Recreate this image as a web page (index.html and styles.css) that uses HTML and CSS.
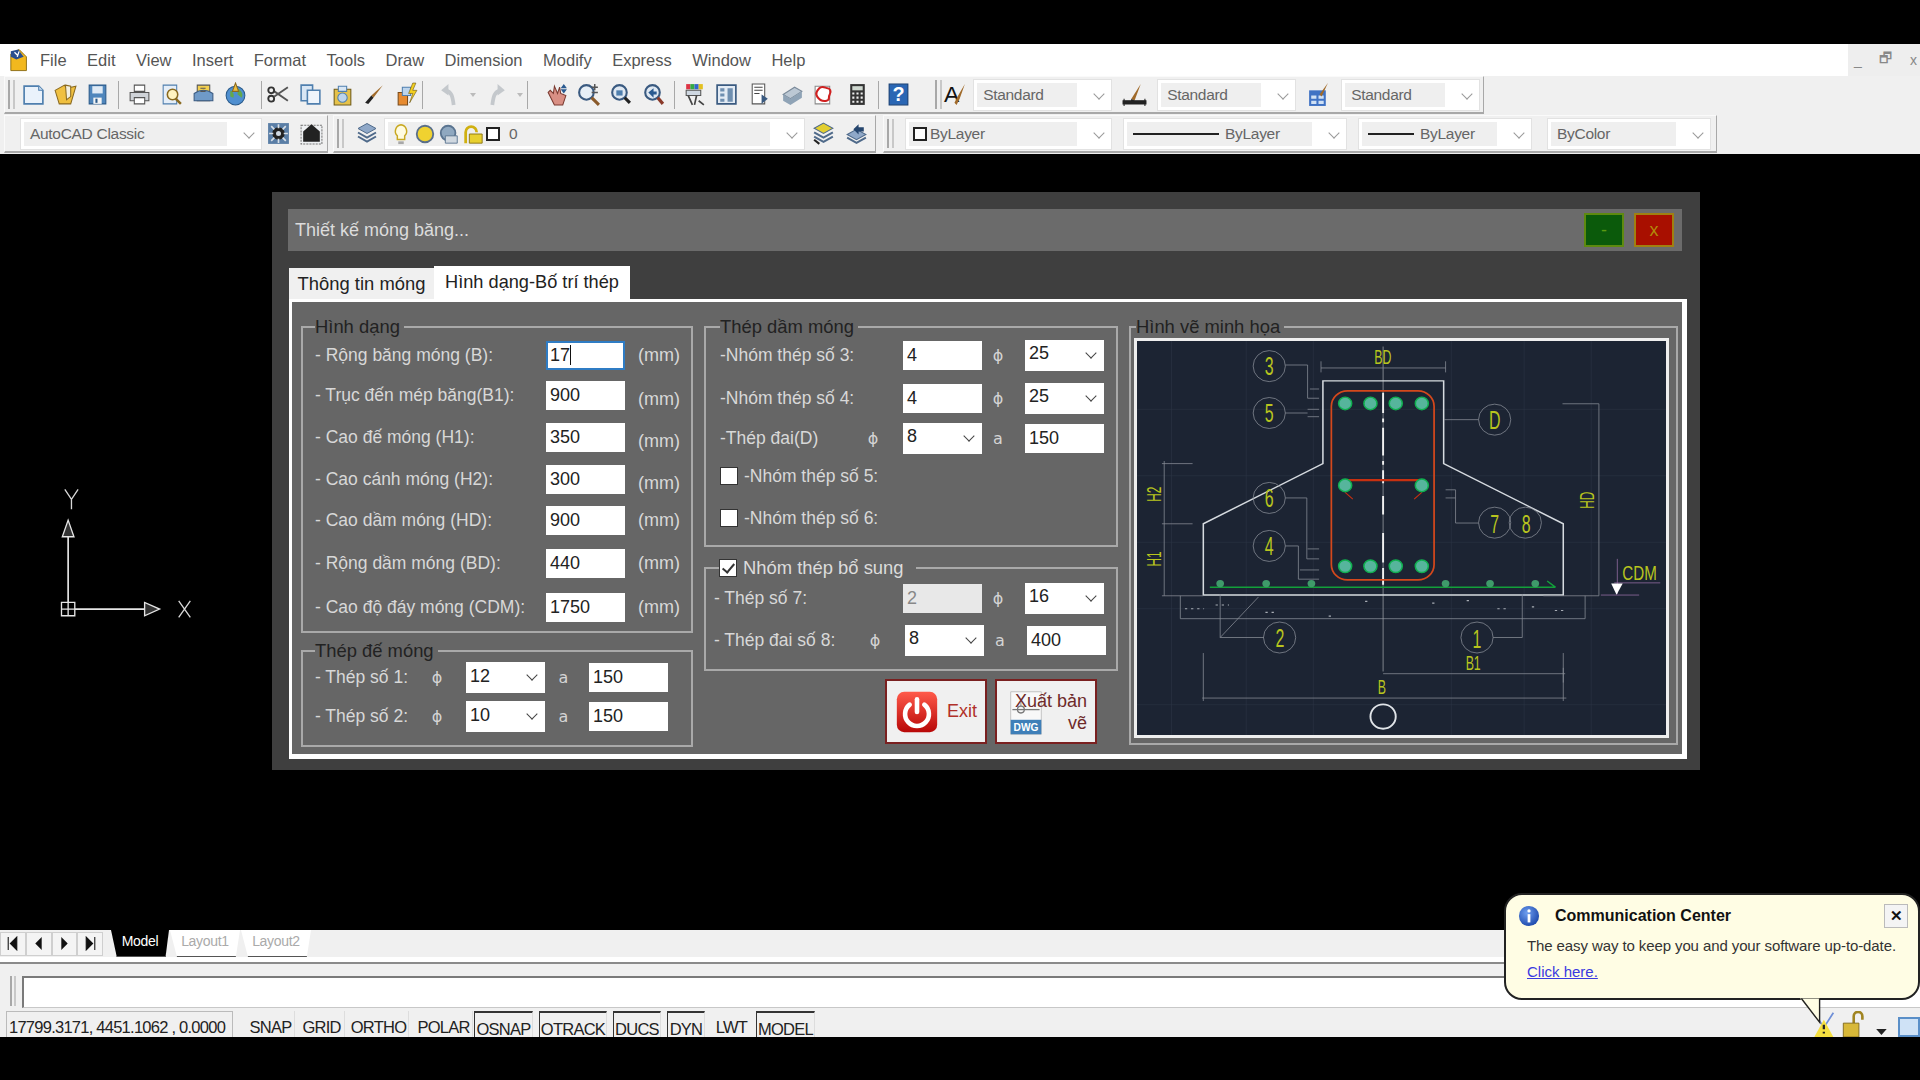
FILE: index.html
```html
<!DOCTYPE html>
<html lang="vi">
<head>
<meta charset="utf-8">
<title>AutoCAD - Thiết kế móng băng</title>
<link rel="stylesheet" href="styles.css">
</head>
<body>
<div class="band-top"></div>
<div class="app">
  <nav class="menubar">
    <svg class="logo" viewBox="0 0 24 26"><path d="M2 6l9-5 8 8v15H2z" fill="#f2b81e" stroke="#8a6a10"/><path d="M2 3l8-2 6 8-8 3-6-3z" fill="#2a4f8f"/><path d="M6 4l3 3M11 3l-2 6" stroke="#fff" stroke-width="1.4"/></svg>
    <div class="menu-items">
      <span>File</span><span>Edit</span><span>View</span><span>Insert</span><span>Format</span><span>Tools</span><span>Draw</span><span>Dimension</span><span>Modify</span><span>Express</span><span>Window</span><span>Help</span>
    </div>
    <div class="winctl"><span>_</span><span>🗗</span><span>x</span></div>
  </nav>

  <div class="tb-row tb-row1">
    <div class="tb tb-std">
      <i class="grip"></i>
      <b class="ic"><svg viewBox="0 0 24 24"><path d="M3 4h14l4 4v13H3z" fill="#eaf2fb" stroke="#4f7fae" stroke-width="1.6"/><path d="M17 4v4h4" fill="#cfe0f2" stroke="#4f7fae"/></svg></b>
      <b class="ic"><svg viewBox="0 0 24 24"><path d="M2 8l9-5 2 3 9-2-5 17H6z" fill="#f0c040" stroke="#8a6a20"/><path d="M12 3l5 1v10l-4 3z" fill="#f4f0e0" stroke="#8a6a20"/></svg></b>
      <b class="ic"><svg viewBox="0 0 24 24"><path d="M4 3h16v18H4z" fill="#4f86bc" stroke="#2a5a8a"/><path d="M7 4h10v7H7z" fill="#dfeaf5"/><path d="M8 15h8v6H8z" fill="#f5f5f5"/><path d="M10 16h2v4h-2z" fill="#2a5a8a"/></svg></b>
      <i class="sep s1"></i>
      <b class="ic"><svg viewBox="0 0 24 24"><path d="M7 3h10v6H7z" fill="#fff" stroke="#555"/><path d="M3 10h18v8H3z" fill="#cfd3d8" stroke="#555"/><path d="M7 15h10v6H7z" fill="#fff" stroke="#555"/></svg></b>
      <b class="ic"><svg viewBox="0 0 24 24"><path d="M4 3h13v18H4z" fill="#e5eef8" stroke="#4f7fae"/><circle cx="13" cy="12" r="5" fill="#fff3c0" stroke="#8a6a20" stroke-width="1.5"/><path d="M16 16l5 5" stroke="#8a6a20" stroke-width="2.4"/></svg></b>
      <b class="ic"><svg viewBox="0 0 24 24"><path d="M6 3h12v15H6z" fill="#f3d050" stroke="#555"/><path d="M3 11c6-4 12-4 18 0v7H3z" fill="#6f9ac8" stroke="#3a5a80"/><path d="M9 6h5M9 9h5" stroke="#555"/></svg></b>
      <b class="ic"><svg viewBox="0 0 24 24"><circle cx="12" cy="13" r="9" fill="#4f8fd0" stroke="#2a5a8a"/><path d="M7 8c3 2 4 4 3 7l-3-1zM14 6c3 2 6 5 4 9l-4-3z" fill="#63a84c"/><path d="M12 1l3 8h-6z" fill="#f0c040" stroke="#8a6a20"/></svg></b>
      <i class="sep s2"></i>
      <b class="ic"><svg viewBox="0 0 24 24"><path d="M21 5L8 14M21 18L8 9" stroke="#555" stroke-width="1.8"/><circle cx="5" cy="8" r="2.8" fill="none" stroke="#333" stroke-width="1.8"/><circle cx="5" cy="16" r="2.8" fill="none" stroke="#333" stroke-width="1.8"/></svg></b>
      <b class="ic"><svg viewBox="0 0 24 24"><path d="M3 3h11v15H3z" fill="#d8e6f4" stroke="#4f7fae" stroke-width="1.5"/><path d="M9 8h12v13H9z" fill="#eef4fb" stroke="#4f7fae" stroke-width="1.5"/></svg></b>
      <b class="ic"><svg viewBox="0 0 24 24"><path d="M4 7h16v15H4z" fill="#e6c24a" stroke="#6f5a18"/><path d="M8 4h8v5H8z" fill="#d8e6f4" stroke="#4f7fae"/><circle cx="12" cy="15" r="4.5" fill="#bcd4ec" stroke="#4f7fae"/></svg></b>
      <b class="ic"><svg viewBox="0 0 24 24"><path d="M20 3l-9 12-2-2z" fill="#a06a2a"/><path d="M9 13l2 2-5 6-3-1z" fill="#222"/></svg></b>
      <b class="ic"><svg viewBox="0 0 24 24"><path d="M4 10h9v12H4z" fill="#e68a30" stroke="#7a4a18"/><path d="M8 5h8v8H8z" fill="#bcd4ec" stroke="#4f7fae"/><path d="M18 1l-4 10h4l-3 9 7-12h-4l3-7z" fill="#f3d020" stroke="#6f5a18" stroke-width=".6"/></svg></b>
      <i class="sep s3"></i>
      <b class="ic"><svg viewBox="0 0 24 24"><path d="M16 22c-1-8-2-13-8-14" fill="none" stroke="#c4c8cc" stroke-width="3.6"/><path d="M11 2L4 8l7 5z" fill="#c4c8cc"/></svg></b>
      <b class="ic narrow"><i class="mini"></i></b>
      <b class="ic mirror"><svg viewBox="0 0 24 24"><path d="M16 22c-1-8-2-13-8-14" fill="none" stroke="#c4c8cc" stroke-width="3.6"/><path d="M11 2L4 8l7 5z" fill="#c4c8cc"/></svg></b>
      <b class="ic narrow"><i class="mini"></i></b>
      <i class="sep s4"></i>
      <b class="ic"><svg viewBox="0 0 24 24"><path d="M4 10l6 12h8l3-9-5-2-1-6-2 6-3-7-1 7-3-3z" fill="#d98f84" stroke="#7a3a30"/><path d="M19 2l3 4h-6zM19 11l3-4h-6z" fill="#2a5a90"/></svg></b>
      <b class="ic"><svg viewBox="0 0 24 24"><circle cx="10" cy="10" r="7" fill="#e6eef6" stroke="#3a5a80" stroke-width="2"/><path d="M15 15l7 7" stroke="#8a5a2a" stroke-width="3"/><path d="M18 2v6M15 5h6M15 10h6" stroke="#555" stroke-width="1.4"/></svg></b>
      <b class="ic"><svg viewBox="0 0 24 24"><circle cx="11" cy="10" r="7" fill="#dfe8f2" stroke="#3a5a80" stroke-width="2"/><path d="M8 8h6v5H8z" fill="#4f7fae"/><path d="M16 15l5 5" stroke="#222" stroke-width="3"/></svg></b>
      <b class="ic"><svg viewBox="0 0 24 24"><circle cx="12" cy="10" r="7" fill="#dfe8f2" stroke="#3a5a80" stroke-width="2"/><path d="M8 10l5-4v3h3v3h-3v3z" fill="#2a5a90"/><path d="M17 15l5 6" stroke="#8a3a2a" stroke-width="3"/></svg></b>
      <i class="sep s5"></i>
      <b class="ic"><svg viewBox="0 0 24 24"><path d="M4 2h4v5H4z" fill="#d34"/><path d="M8 2h4v5H8z" fill="#3a4"/><path d="M12 2h4v5h-4z" fill="#36c"/><path d="M16 2h4v5h-4z" fill="#e3c020"/><path d="M4 8h14v5H4z" fill="#cfd8e2" stroke="#555"/><path d="M6 13l4 9M14 13l-2 9M16 18l5 4" stroke="#444" stroke-width="1.6"/></svg></b>
      <b class="ic"><svg viewBox="0 0 24 24"><path d="M3 3h18v18H3z" fill="#e3ebf4" stroke="#3a5a80" stroke-width="1.6"/><path d="M6 6h4v3H6zM6 11h4v3H6zM6 16h4v3H6zM13 6h5v13h-5z" fill="#6f8fb0"/></svg></b>
      <b class="ic"><svg viewBox="0 0 24 24"><path d="M5 2h12v19H5z" fill="#fff" stroke="#555"/><path d="M7 5h8M7 8h8M7 11h5" stroke="#444"/><path d="M14 12l6 4-6 5z" fill="#3a5a80"/></svg></b>
      <b class="ic"><svg viewBox="0 0 24 24"><path d="M3 12l11-7 7 4-11 7z" fill="#bcc8d4" stroke="#7a8a9a"/><path d="M3 12v6l7 4 11-7V9l-11 7z" fill="#8fa3b6"/></svg></b>
      <b class="ic"><svg viewBox="0 0 24 24"><path d="M3 4h14v17H3z" fill="#fff" stroke="#888"/><path d="M7 6c3-3 6 0 8 0s4 3 2 6 1 5-3 6-7-1-9-4 0-6 2-8z" fill="none" stroke="#d02020" stroke-width="2"/></svg></b>
      <b class="ic"><svg viewBox="0 0 24 24"><path d="M5 2h14v20H5z" fill="#333"/><path d="M7 4h10v4H7z" fill="#cfd8d0"/><path d="M7 10h2v2H7zM11 10h2v2h-2zM15 10h2v2h-2zM7 14h2v2H7zM11 14h2v2h-2zM15 14h2v2h-2zM7 18h2v2H7zM11 18h2v2h-2zM15 18h2v2h-2z" fill="#eee"/></svg></b>
      <i class="sep s6"></i>
      <b class="ic ic-help"><svg viewBox="0 0 24 24"><path d="M3 2h18v20H3z" fill="#2a66b4" stroke="#163c70"/><text x="12" y="18" class="qmark">?</text></svg></b>
      <i class="grip g2"></i>
      <b class="ic ic-a"><svg viewBox="0 0 24 24"><text x="1" y="19" class="aglyph">A</text><path d="M21 2l-7 12 2 2zM14 14l2 2-3 6-2-2z" fill="#a06a2a"/></svg></b>
      <span class="tcombo w139"><em>Standard</em></span>
      <b class="ic ic-tight"><svg viewBox="0 0 24 24"><path d="M18 2L9 16l3 2z" fill="#a06a2a"/><path d="M9 16l3 2-4 3z" fill="#222"/><path d="M1 18h22v3H1zM2 16v7M22 16v7" stroke="#222" fill="#222"/></svg></b>
      <span class="tcombo w139"><em>Standard</em></span>
      <b class="ic ic-tight"><svg viewBox="0 0 24 24"><path d="M3 8h16v15H3z" fill="#3f72c4"/><path d="M5 13h5v3H5zM12 13h5v3h-5zM5 18h5v3H5zM12 18h5v3h-5z" fill="#cfe0f4"/><path d="M21 1l-8 11 2 2z" fill="#a06a2a"/></svg></b>
      <span class="tcombo w139"><em>Standard</em></span>
    </div>
  </div>

  <div class="tb-row tb-row2">
    <div class="tb tb-wks">
      <span class="tcombo w242"><em>AutoCAD Classic</em></span>
      <b class="ic ic-33"><svg viewBox="0 0 24 24"><path d="M2 2h20v20H2z" fill="#5a7ea6"/><circle cx="12" cy="12" r="6" fill="#222"/><circle cx="12" cy="12" r="2.4" fill="#cfd8e2"/><path d="M12 3v4M12 17v4M3 12h4M17 12h4M5 5l3 3M16 16l3 3M19 5l-3 3M5 19l3-3" stroke="#d8e0e8" stroke-width="1.6"/></svg></b>
      <b class="ic ic-33"><svg viewBox="0 0 24 24"><path d="M2 4h20v18H2z" fill="#eef0f2" stroke="#777" stroke-dasharray="2 1"/><path d="M12 3l8 7v10H4V10z" fill="#222"/></svg></b>
    </div>
    <div class="tb tb-layer">
      <i class="grip"></i>
      <b class="ic ic-24"><svg viewBox="0 0 24 24"><path d="M12 2l9 5-9 5-9-5z" fill="#8fa8c8" stroke="#4f6a8a"/><path d="M3 11l9 5 9-5M3 15l9 5 9-5" fill="none" stroke="#4f6a8a" stroke-width="2"/></svg></b>
      <div class="tcombo layer-combo">
        <em class="layer-fill">
          <svg class="li" viewBox="0 0 24 24"><path d="M12 2a7 7 0 0 1 4 12v4H8v-4a7 7 0 0 1 4-12z" fill="#fffbe0" stroke="#c8a820" stroke-width="1.6"/><path d="M9 20h6v3H9z" fill="#a8a8a8"/></svg>
          <svg class="li" viewBox="0 0 24 24"><circle cx="12" cy="12" r="9" fill="#f0d230" stroke="#5a6f8a" stroke-width="2"/></svg>
          <svg class="li" viewBox="0 0 24 24"><circle cx="11" cy="11" r="8" fill="#8fa8c0" stroke="#5a7490" stroke-width="2"/><path d="M8 14h13v8H8z" fill="#d0d8e0" stroke="#5a7490"/></svg>
          <svg class="li" viewBox="0 0 24 24"><path d="M4 22V10a6 6 0 0 1 12 0" fill="none" stroke="#d0b010" stroke-width="3"/><path d="M8 12h14v10H8z" fill="#e8d030" stroke="#8a7410"/></svg>
          <i class="swatch"></i>
          <span class="zero">0</span>
        </em>
      </div>
      <b class="ic ic-33"><svg viewBox="0 0 24 24"><path d="M12 2l9 5-9 5-9-5z" fill="#e3cf30" stroke="#4f6a8a"/><path d="M3 11l9 5 9-5M3 15l9 5 9-5" fill="none" stroke="#4f6a8a" stroke-width="2"/><path d="M3 18l5 4" stroke="#222" stroke-width="2"/></svg></b>
      <b class="ic ic-33"><svg viewBox="0 0 24 24"><path d="M12 8l9 5-9 5-9-5z" fill="#8fa8c8" stroke="#4f6a8a"/><path d="M3 16l9 5 9-5" fill="none" stroke="#4f6a8a" stroke-width="2"/><path d="M9 8l5-5v3h5v4h-5v3z" fill="#26466e"/></svg></b>
    </div>
    <div class="tb tb-props">
      <i class="grip"></i>
      <span class="tcombo prop1"><em><i class="swatch"></i>ByLayer</em></span>
      <span class="tcombo prop2"><em><i class="lineweight long"></i>ByLayer</em></span>
      <span class="tcombo prop3"><em><i class="lineweight"></i>ByLayer</em></span>
      <span class="tcombo prop4"><em>ByColor</em></span>
    </div>
  </div>

  <main class="canvas">
    <svg class="ucs" viewBox="0 0 180 160">
      <path d="M24 110V28M32 118h86" stroke="#e6e6e6" stroke-width="2" fill="none"/>
      <path d="M16 110h16v16H16zM24 110v16M16 118h16" stroke="#e6e6e6" stroke-width="1.6" fill="none"/>
      <path d="M24 11l-7 20h14z" stroke="#e6e6e6" stroke-width="1.6" fill="#333"/>
      <path d="M116 110l0 16 18-8z" stroke="#e6e6e6" stroke-width="1.6" fill="#333"/>
      <path d="M20 -26l8 12 8-12M28 -14v12M157 108l14 20M171 108l-14 20" stroke="#d8d8d8" stroke-width="1.6" fill="none"/>
    </svg>

    <section class="dialog">
      <header class="titlebar">
        <span class="title">Thiết kế móng băng...</span>
        <div class="title-btns"><button class="tbtn min">-</button><button class="tbtn close">x</button></div>
      </header>
      <div class="tabs">
        <span class="tab">Thông tin móng</span>
        <span class="tab active">Hình dạng-Bố trí thép</span>
      </div>
      <div class="panel">
        <div class="col">
          <fieldset class="fs fs-shape">
            <legend>Hình dạng</legend>
            <div class="shape-row"><label>- Rộng băng móng (B):</label><span class="field focus">17<i class="caret"></i></span><span class="mm">(mm)</span></div>
            <div class="shape-row"><label>- Trục đến mép băng(B1):</label><span class="field">900</span><span class="mm low">(mm)</span></div>
            <div class="shape-row"><label>- Cao đế móng (H1):</label><span class="field">350</span><span class="mm low">(mm)</span></div>
            <div class="shape-row"><label>- Cao cánh móng (H2):</label><span class="field">300</span><span class="mm low">(mm)</span></div>
            <div class="shape-row"><label>- Cao dầm móng (HD):</label><span class="field">900</span><span class="mm">(mm)</span></div>
            <div class="shape-row"><label>- Rộng dầm móng (BD):</label><span class="field">440</span><span class="mm">(mm)</span></div>
            <div class="shape-row"><label>- Cao độ đáy móng (CDM):</label><span class="field">1750</span><span class="mm">(mm)</span></div>
          </fieldset>
          <fieldset class="fs fs-foot">
            <legend>Thép đế móng</legend>
            <div class="foot-row"><label>- Thép số 1:</label><span class="phi">ϕ</span><span class="dd">12</span><span class="aa">a</span><span class="field">150</span></div>
            <div class="foot-row"><label>- Thép số 2:</label><span class="phi">ϕ</span><span class="dd">10</span><span class="aa">a</span><span class="field">150</span></div>
          </fieldset>
        </div>
        <div class="col">
          <fieldset class="fs fs-beam">
            <legend>Thép dầm móng</legend>
            <div class="beam-row"><label class="wide">-Nhóm thép số 3:</label><span class="field">4</span><span class="phi2">ϕ</span><span class="dd">25</span></div>
            <div class="beam-row"><label class="wide">-Nhóm thép số 4:</label><span class="field">4</span><span class="phi2">ϕ</span><span class="dd">25</span></div>
            <div class="beam-row"><label>-Thép đai(D)</label><span class="phi">ϕ</span><span class="dd">8</span><span class="aa2">a</span><span class="field">150</span></div>
            <div class="beam-row"><label class="wide check"><i class="box"></i>-Nhóm thép số 5:</label></div>
            <div class="beam-row"><label class="wide check"><i class="box"></i>-Nhóm thép số 6:</label></div>
          </fieldset>
          <fieldset class="fs fs-extra">
            <legend class="check-legend"><i class="box on"></i>Nhóm thép bổ sung</legend>
            <div class="beam-row r-a"><label class="wide">- Thép số 7:</label><span class="field off">2</span><span class="phi2">ϕ</span><span class="dd">16</span></div>
            <div class="beam-row r-b"><label>- Thép đai số 8:</label><span class="phi">ϕ</span><span class="dd">8</span><span class="aa2">a</span><span class="field">400</span></div>
          </fieldset>
          <div class="actions">
            <button class="act exit">
              <svg viewBox="0 0 48 48"><defs><linearGradient id="rd" x1="0" y1="0" x2="0" y2="1"><stop offset="0" stop-color="#ff5a4a"/><stop offset="1" stop-color="#b80808"/></linearGradient></defs><rect x="2" y="2" width="44" height="44" rx="8" fill="url(#rd)"/><path d="M16 16a13 13 0 1 0 16 0" fill="none" stroke="#fff" stroke-width="5" stroke-linecap="round"/><path d="M24 10v14" stroke="#fff" stroke-width="5" stroke-linecap="round"/></svg>
              <span>Exit</span>
            </button>
            <button class="act publish">
              <svg viewBox="0 0 40 52"><path d="M2 1h36v50H2z" fill="#f8f8f8" stroke="#bbb"/><path d="M4 22h32" stroke="#777" stroke-width="1.5"/><circle cx="14" cy="22" r="4" fill="none" stroke="#777" stroke-width="1.5"/><path d="M14 12v6" stroke="#777"/><path d="M2 34h36v17H2z" fill="#3f7fb8"/><text x="20" y="47" class="dwg">DWG</text></svg>
              <span>Xuất bản<br>vẽ</span>
            </button>
          </div>
        </div>
        <div class="col">
          <fieldset class="fs fs-img">
            <legend>Hình vẽ minh họa</legend>
            <svg class="drawing" viewBox="45 405 1380 1067" preserveAspectRatio="none">
              <rect x="45" y="405" width="1380" height="1067" fill="#1c2433"/>
              <g class="d-grid">
                <path d="M135 405v1067M330 405v1067M505 405v1067M865 405v1067M1055 405v1067M1230 405v1067M45 590h1380M45 770h1380M45 950h1380M45 1130h1380M45 1390h1380"/>
              </g>
              <path class="d-conc" d="M158 1095v62h1056v-62"/>
              <path class="d-conc dots" d="M170 1130h50M250 1120h35M380 1140h30M545 1150h10M640 1110h12M815 1115h15M905 1108h12M985 1130h30M1075 1125h15M1135 1135h30"/>
              <path class="d-center" d="M687 420V1300"/>
              <path class="d-outline" d="M218 1093V900L530 737V513H845V737L1157 900V1093Z"/>
              <path class="d-dash" d="M687 545v55M687 615v10M687 640v75M687 730v10M687 755v35M687 825v50M687 925v80M687 1020v45"/>
              <rect class="d-stir" x="552" y="540" width="268" height="512" rx="42"/>
              <path class="d-tie" d="M595 782H780"/>
              <path class="d-tick" d="M588 815l20 18M788 815l-20 18"/>
              <path class="d-bot" d="M235 1072H1135M1115 1055l22 17"/>
              <g class="d-smallbars"><circle cx="262" cy="1062" r="10"/><circle cx="382" cy="1062" r="10"/><circle cx="500" cy="1062" r="10"/><circle cx="850" cy="1062" r="10"/><circle cx="966" cy="1062" r="10"/><circle cx="1084" cy="1062" r="10"/></g>
              <g class="d-bars">
                <circle cx="588" cy="574" r="17"/><circle cx="654" cy="574" r="17"/><circle cx="720" cy="574" r="17"/><circle cx="788" cy="574" r="17"/>
                <circle cx="588" cy="796" r="17"/><circle cx="788" cy="796" r="17"/>
                <circle cx="588" cy="1015" r="17"/><circle cx="654" cy="1015" r="17"/><circle cx="720" cy="1015" r="17"/><circle cx="788" cy="1015" r="17"/>
              </g>
              <g class="d-thin">
                <circle cx="390" cy="473" r="42"/><circle cx="390" cy="600" r="42"/><circle cx="978" cy="618" r="42"/><circle cx="390" cy="830" r="42"/><circle cx="390" cy="960" r="42"/><circle cx="978" cy="897" r="42"/><circle cx="1058" cy="897" r="42"/><circle cx="417" cy="1208" r="42"/><circle cx="932" cy="1208" r="42"/>
                <path d="M432 470h58v90h30M496 535h24M432 600h58M490 590h30M490 610h30M846 618h90M432 830h56v165h32M490 968h30M432 960h34v90h54M470 1025h50M850 808h26v90h60M850 830h26"/>
                <path d="M262 1090v118h114M262 1208l100-110M974 1208h76v-118"/>
                <path d="M525 478h325M525 460v30M850 460v30M1155 575h95M1250 575v520M110 737h80M110 900h80M116 730v365M1250 1095h-145M110 1095h108"/>
                <path d="M218 1250v130M1157 1250v130M215 1372h950M687 1306h475M1157 1290v40"/>
                <circle class="d-ring" cx="687" cy="1422" r="33"/>
              </g>
              <path class="d-cdm" d="M1255 1093h100M1290 1060h120M1298 995v95"/>
              <path class="d-tri" d="M1282 1062h30l-16 30z"/>
              <g class="d-txt">
                <text transform="translate(390 497) scale(.8 1.32)">3</text>
                <text transform="translate(390 624) scale(.8 1.32)">5</text>
                <text transform="translate(978 644) scale(.8 1.32)">D</text>
                <text transform="translate(390 854) scale(.8 1.32)">6</text>
                <text transform="translate(390 985) scale(.8 1.32)">4</text>
                <text transform="translate(978 924) scale(.8 1.32)">7</text>
                <text transform="translate(1060 924) scale(.8 1.32)">8</text>
                <text transform="translate(418 1234) scale(.8 1.32)">2</text>
                <text transform="translate(932 1236) scale(.8 1.32)">1</text>
                <text transform="translate(686 468) scale(.62 1.05)">BD</text>
                <text transform="translate(922 1296) scale(.62 1.05)">B1</text>
                <text transform="translate(684 1362) scale(.62 1.05)">B</text>
                <text transform="translate(108 820) rotate(-90) scale(.62 1.05)">H2</text>
                <text transform="translate(108 995) rotate(-90) scale(.62 1.05)">H1</text>
                <text transform="translate(1238 836) rotate(-90) scale(.62 1.05)">HD</text>
                <text transform="translate(1356 1052) scale(.76 1.1)">CDM</text>
              </g>
            </svg>
          </fieldset>
        </div>
      </div>
    </section>
  </main>

  <div class="layout-tabs">
    <div class="nav-btns">
      <b><svg viewBox="0 0 10 14"><path d="M1 1v12M9 1L3 7l6 6z" stroke="#111" fill="#111"/></svg></b>
      <b><svg viewBox="0 0 10 14"><path d="M8 1L2 7l6 6z" fill="#111"/></svg></b>
      <b><svg viewBox="0 0 10 14"><path d="M2 1l6 6-6 6z" fill="#111"/></svg></b>
      <b><svg viewBox="0 0 10 14"><path d="M9 1v12M1 1l6 6-6 6z" stroke="#111" fill="#111"/></svg></b>
    </div>
    <span class="lt model">Model</span>
    <span class="lt">Layout1</span>
    <span class="lt">Layout2</span>
  </div>
  <div class="command">
    <i class="grip"></i>
    <div class="cmd-input"></div>
  </div>
  <footer class="status">
    <span class="coords">17799.3171, 4451.1062 , 0.0000</span>
    <span class="st snap">SNAP</span><span class="st grid">GRID</span><span class="st ortho">ORTHO</span><span class="st polar">POLAR</span>
    <span class="st on osnap">OSNAP</span><span class="st on otrack">OTRACK</span><span class="st on ducs">DUCS</span><span class="st on dyn">DYN</span><span class="st lwt">LWT</span><span class="st on model-btn">MODEL</span>
    <div class="tray">
      <svg class="tr-warn" viewBox="0 0 26 30"><path d="M2 2l9 14M24 2l-9 14" stroke="#6f8fd8" stroke-width="2"/><path d="M13 10l11 20H2z" fill="#f6e040"/><path d="M13 16v5M13 24v2" stroke="#222" stroke-width="2.6"/></svg>
      <svg class="tr-lock" viewBox="0 0 26 30"><path d="M14 14V6a5 5 0 0 1 10 0v4" fill="none" stroke="#a08420" stroke-width="3"/><path d="M2 14h18v16H2z" fill="#d8b838" stroke="#7a6418"/></svg>
      <svg class="tr-caret" viewBox="0 0 12 8"><path d="M0 1h12L6 8z" fill="#222"/></svg>
      <i class="tr-clean"></i>
    </div>
  </footer>
</div>

<aside class="balloon">
  <svg class="tail" viewBox="0 0 40 50"><path d="M0 0L28 36V0z" fill="#fffde4"/><path d="M2 0L28 34V0" fill="none" stroke="#222" stroke-width="2"/></svg>
  <div class="b-head">
    <svg class="info" viewBox="0 0 24 24"><defs><radialGradient id="bl" cx=".4" cy=".35" r=".8"><stop offset="0" stop-color="#6f9ff0"/><stop offset="1" stop-color="#0f3aa0"/></radialGradient></defs><circle cx="12" cy="12" r="11" fill="url(#bl)"/><path d="M10.5 10h3v9h-3z" fill="#fff"/><circle cx="12" cy="6.5" r="1.8" fill="#fff"/></svg>
    <strong>Communication Center</strong>
    <b class="b-close">✕</b>
  </div>
  <p>The easy way to keep you and your software up-to-date.</p>
  <a href="#">Click here.</a>
</aside>

<div class="band-bottom"></div>
</body>
</html>
```

FILE: styles.css
```css
* { box-sizing: border-box; }
html, body { margin: 0; padding: 0; }
body {
  width: 1920px; height: 1080px; overflow: hidden; background: #000;
  position: relative;
  display: flex; flex-direction: column;
  font-family: "Liberation Sans", Arial, sans-serif;
  color: #222;
}
.band-top { height: 44px; flex: none; background: #000; }
.band-bottom { flex: 1; background: #000; }
.app { height: 993px; flex: none; display: flex; flex-direction: column; background: #f0f0f0; overflow: hidden; }

/* menu */
.menubar { height: 32px; flex: none; background: #fff; display: flex; align-items: center; padding-left: 9px; position: relative; }
.logo { width: 22px; height: 25px; flex: none; }
.menu-items { display: flex; gap: 20.5px; margin-left: 9px; font-size: 16.5px; color: #555; }
.winctl { margin-left: auto; align-self: stretch; width: 72px; background: #eeeeee; display: flex; align-items: center; justify-content: space-between; padding: 0 3px 0 6px; font-size: 14px; color: #888; }

/* toolbars */
.tb-row { display: flex; flex: none; height: 39px; background: #f0f0f0; padding-left: 4px; }
.tb { display: flex; align-items: center; height: 38px; background: #f0f0f0; border: 1px solid #fafafa; border-right-color: #a8a8a8; border-bottom: 2px solid #a8a8a8; position: relative; }
.tb-std { width: 1480px; padding-left: 12px; }
.tb-wks { width: 324px; padding-left: 15px; }
.tb-layer { width: 543px; margin-left: 5px; padding-left: 21px; }
.tb-props { width: 834px; margin-left: 7px; padding-left: 21px; }
.grip { position: absolute; left: 3px; top: 3px; bottom: 3px; width: 7px; border-left: 2px solid #a8a8a8; border-right: 2px solid #c8c8c8; }
.grip.g2 { left: 930px; }
.ic { flex: none; width: 32px; height: 32px; display: flex; align-items: center; justify-content: center; }
.ic svg { width: 25px; height: 25px; display: block; }
.ic.narrow { width: 15px; }
.s5 ~ .ic { width: 32.6px; }
.mini { width: 0; height: 0; border: 3px solid transparent; border-top: 4px solid #bbb; margin-top: 4px; }
.mirror svg { transform: scaleX(-1); }
.s5 ~ .ic-a { width: 32px; margin-left: 24px; }
.s5 ~ .ic-tight { width: 41px; margin-left: 2px; }
.ic-33 { width: 33px; }
.ic-24 { width: 24px; }
.sep { flex: none; width: 1px; height: 28px; background: #a8a8a8; }
.s1 { margin: 0 4px 0 5px; }
.s2 { margin: 0 0 0 10px; }
.s3 { margin: 0 10px 0 0; }
.s4 { margin: 0 12px 0 0; }
.s5 { margin: 0 3px 0 6px; }
.s6 { margin: 0 4px 0 4px; }

.tcombo { position: relative; flex: none; height: 32px; background: #fff; border: 1px solid #e2e2e2; padding: 3px 34px 3px 3px; display: flex; font-size: 15.5px; letter-spacing: -.3px; color: #666; }
.tcombo em { flex: 1; font-style: normal; background: #efefef; display: flex; align-items: center; padding-left: 6px; white-space: nowrap; }
.tcombo::after { content: ""; position: absolute; right: 8px; top: 10px; width: 7px; height: 7px; border-right: 1px solid #999; border-bottom: 1px solid #999; transform: rotate(45deg); }
.w139 { width: 139px; margin-left: 2px; }
.w242 { width: 242px; }
.layer-combo { width: 421px; margin: 0 2px 0 5px; }
.layer-fill { gap: 2px; padding-left: 2px !important; }
.li { width: 22px; height: 22px; flex: none; }
.swatch { display: block; width: 14px; height: 14px; border: 2px solid #222; background: #fff; flex: none; margin-right: 3px; }
.zero { margin-left: 4px; }
.prop1 { width: 207px; margin-right: 11px; }
.prop2 { width: 224px; margin-right: 11px; }
.prop3 { width: 174px; margin-right: 15px; }
.prop4 { width: 164px; }
.prop1 em { padding-left: 4px; }
.lineweight { display: block; height: 2px; width: 46px; background: #222; margin-right: 6px; flex: none; }
.lineweight.long { width: 86px; }
.qmark { font: 700 19px "Liberation Sans", sans-serif; fill: #fff; text-anchor: middle; }
.aglyph { font: 400 22px "Liberation Sans", sans-serif; fill: #111; }

/* drawing area */
.canvas { flex: none; height: 776px; background: #000; position: relative; }
.ucs { position: absolute; left: 48px; top: 357px; width: 150px; height: 133px; overflow: visible; }
.dialog { position: absolute; left: 272px; top: 38px; width: 1428px; height: 578px; background: #3f3f3f; padding: 17px 13px 11px 17px; }
.titlebar { height: 42px; margin: 0 5px 0 -1px; background: #6b6b6b; display: flex; align-items: center; justify-content: space-between; padding: 0 8px 0 7px; }
.title { color: #dcdcdc; font-size: 18px; }
.title-btns { display: flex; gap: 10px; }
.tbtn { width: 40px; height: 34px; padding: 0; font: 18px "Liberation Sans", sans-serif; color: #b28a0a; border: 2px solid #7c8a10; }
.tbtn.min { background: #0b5a0b; color: #5c9a12; border-color: #5e8a10; }
.tbtn.close { background: #a80f00; border-color: #a08010; }
.tabs { height: 34px; margin-top: 14px; display: flex; align-items: flex-end; }
.tab { height: 31px; width: 145px; background: #f0f0f0; font-size: 18.4px; color: #222; display: flex; align-items: center; justify-content: center; }
.tab.active { height: 33px; width: 196px; background: #fff; padding-bottom: 1px; font-size: 18.2px; }
.panel { height: 460px; background: #666; border: 3px solid #fff; border-bottom-width: 5px; border-right-width: 5px; padding: 14px 0 0 9px; display: grid; grid-template-columns: 392px 414px 549px; column-gap: 11px; align-items: start; color: #d8d8d8; font-size: 17.5px; }
.col { display: flex; flex-direction: column; }
.fs { margin: 0; min-width: 0; padding: 0 0 0 12px; border: 2px solid #a9a9a9; display: block; }
.fs legend { padding: 0 4px 0 0; font-size: 18.4px; line-height: 22px; color: #222; height: 22px; }
label { white-space: nowrap; }

.field { display: flex; align-items: center; height: 29px; background: #fff; color: #222; padding-left: 4px; font-size: 18px; width: 79px; }
.field.focus { border: 2px solid #2f7cc4; padding-left: 2px; position: relative; }
.caret { display: block; width: 1px; height: 20px; background: #111; }
.field.off { background: #e8e8e8; color: #888; }
.dd { position: relative; display: flex; align-items: center; height: 31px; background: #fff; color: #222; padding: 0 0 3px 4px; width: 79px; font-size: 18px; }
.dd::after { content: ""; position: absolute; right: 9px; top: 9px; width: 7px; height: 7px; border-right: 1.5px solid #444; border-bottom: 1.5px solid #444; transform: rotate(45deg); }
.phi, .phi2, .aa, .aa2 { font-family: "DejaVu Sans", sans-serif; font-size: 16px; text-align: center; color: #d4d4d4; }

.fs-shape { height: 317px; }
.shape-row { display: grid; grid-template-columns: 231px 80px 1fr; align-items: center; height: 40px; }
.shape-row:first-of-type { margin-top: -3px; }
.shape-row:nth-of-type(3), .shape-row:nth-of-type(6), .shape-row:nth-of-type(7) { height: 44px; }
.shape-row:nth-of-type(5) { height: 42px; }
.mm { padding-left: 12px; color: #d8d8d8; font-size: 18px; }
.mm.low { margin-top: 8px; }
.fs-foot { margin-top: 7px; padding-bottom: 9px; }
.foot-row { display: grid; grid-template-columns: 108px 43px 78px 45px 79px; align-items: center; height: 39px; }
.foot-row:first-of-type { margin-top: -4px; }
.foot-row .phi { padding-right: 15px; }
.foot-row .aa { padding-right: 6px; }

.fs-beam { height: 231px; padding-left: 14px; }
.fs-extra { margin-top: 10px; height: 114px; padding-left: 8px; }
.beam-row { display: grid; grid-template-columns: 139px 44px 79px 43px 80px; align-items: center; height: 42px; }
.beam-row .wide { grid-column: span 2; }
.beam-row .phi { padding-right: 16px; }
.beam-row .phi2 { padding-right: 11px; }
.beam-row .aa2 { padding-right: 11px; }
.fs-beam .beam-row:first-of-type { margin-top: -4px; }
.fs-beam .beam-row:nth-of-type(2) { height: 44px; }
.fs-beam .beam-row:nth-of-type(3) { height: 36px; }
.fs-beam .beam-row:nth-of-type(4) { height: 40px; }
.fs-beam .beam-row:nth-of-type(5) { height: 44px; }
.check { display: flex; align-items: center; gap: 6px; }
.box { display: block; position: relative; width: 18px; height: 18px; background: #fff; border: 1px solid #333; flex: none; }
.box.on::after { content: ""; position: absolute; left: 5px; top: 1px; width: 5px; height: 10px; border-right: 2px solid #333; border-bottom: 2px solid #333; transform: rotate(40deg); }
.fs .check-legend { display: flex; align-items: center; gap: 6px; margin-left: 5px; padding-right: 12px; color: #dcdcdc; }
.fs-extra .beam-row { grid-template-columns: 145px 44px 79px 43px 80px; }
.fs-extra .r-a { height: 38px; }
.fs-extra .r-b { height: 46px; grid-template-columns: 147px 44px 79px 43px 80px; }
.actions { display: flex; justify-content: flex-end; gap: 8px; padding-right: 21px; margin-top: 8px; }
.act { width: 102px; height: 65px; background: #f0f0f0; border: 2px solid #7a2020; display: flex; align-items: center; padding: 0 4px; font: 18px "Liberation Sans", sans-serif; }
.exit { gap: 8px; color: #b0302a; padding-left: 8px; }
.exit svg { width: 44px; height: 44px; flex: none; }
.publish { position: relative; color: #6e2a2a; padding: 0 8px 0 0; }
.publish svg { position: absolute; left: 12px; top: 9px; width: 34px; height: 46px; }
.publish span { position: relative; flex: 1; text-align: right; line-height: 22px; }
.dwg { font: 700 12px "Liberation Sans", sans-serif; fill: #fff; text-anchor: middle; }

.fs-img { height: 429px; padding: 0 10px 0 3px; }
.fs-img legend { margin-left: 2px; }
.drawing { display: block; width: 535px; height: 400px; border: 3px solid #eee; }
.d-grid path { stroke: #2c3546; stroke-width: 1.5; fill: none; }
.d-conc { stroke: #8a909a; stroke-width: 2; fill: none; }
.d-conc.dots { stroke: #a8adb5; stroke-dasharray: 6 10; stroke-width: 3; }
.d-center { stroke: #a0a4aa; stroke-width: 2; }
.d-outline { fill: none; stroke: #d6dbe0; stroke-width: 4; }
.d-dash { stroke: #f0f0f0; stroke-width: 5; fill: none; }
.d-stir { fill: none; stroke: #d4481c; stroke-width: 4.5; }
.d-tie { stroke: #c83010; stroke-width: 6; }
.d-tick { stroke: #c83010; stroke-width: 3; fill: none; }
.d-bot { stroke: #12a03a; stroke-width: 4; fill: none; }
.d-smallbars circle { fill: #3f9a6a; }
.d-bars circle { fill: #56b59c; stroke: #10b050; stroke-width: 4; }
.d-thin circle, .d-thin path { fill: none; stroke: #8a8f98; stroke-width: 2; }
.d-thin .d-ring { stroke: #e0e4e8; stroke-width: 5; }
.d-cdm { stroke: #9a70a8; stroke-width: 2; fill: none; }
.d-tri { fill: #fff; }
.d-txt text { font: 52px "Liberation Sans", sans-serif; fill: #b8c41e; text-anchor: middle; }

/* bottom bars */
.layout-tabs { height: 27px; flex: none; display: flex; align-items: center; background: #f0f0f0; font-size: 14px; letter-spacing: -.3px; }
.nav-btns { display: flex; width: 103px; height: 24px; margin-right: 8px; }
.nav-btns b { flex: 1; display: flex; align-items: center; justify-content: center; border: 1px solid #cfcfcf; background: #f4f4f4; }
.nav-btns svg { width: 11px; height: 15px; }
.lt { width: 70px; height: 27px; padding-bottom: 4px; display: flex; align-items: center; justify-content: center; color: #aaa; clip-path: polygon(0 0, 100% 0, 94% 100%, 10% 100%); background: #fff; margin-right: 1px; border-bottom: 1px solid #555; }
.lt.model { width: 58px; background: #000; color: #fff; }
.command { height: 51px; flex: none; background: #f0f0f0; position: relative; border-top: 5px solid #fff; padding: 14px 0 0 22px; }
.command::before { content: ""; position: absolute; left: 0; right: 0; top: 0; height: 2px; background: #8a8a8a; }
.command .grip { left: 10px; top: 14px; bottom: 2px; width: 6px; }
.cmd-input { height: 32px; background: #fff; border-top: 2px solid #7a7a7a; border-left: 2px solid #7a7a7a; border-bottom: 1px solid #c8c8c8; }
.status { height: 29px; flex: none; background: #f0f0f0; position: relative; display: flex; align-items: flex-end; font-size: 16.5px; letter-spacing: -.75px; color: #222; padding-left: 6px; overflow: hidden; }
.coords { width: 227px; height: 26px; border: 1px solid #bbb; border-bottom: 0; padding: 6px 0 0 2px; white-space: nowrap; margin-right: 14px; }
.st { height: 26px; padding-top: 7px; text-align: center; border-right: 1px solid #ddd; flex: none; }
.st.on { border: 1px solid #333; border-bottom: 0; border-right: 1px solid #ddd; border-top-width: 2px; }
.snap { width: 48px; margin-right: 4px; }
.grid { width: 46px; margin-right: 4px; }
.ortho { width: 60px; margin-right: 6px; }
.polar { width: 58px; margin-right: 1px; }
.osnap { width: 59px; margin-right: 6px; }
.otrack { width: 68px; margin-right: 6px; }
.ducs { width: 48px; margin-right: 6px; }
.dyn { width: 38px; margin-right: 6px; }
.lwt { width: 41px; border-right: 0; margin-right: 4px; }
.model-btn { width: 59px; }
.tray { position: absolute; right: 0; bottom: 0; width: 108px; height: 26px; display: flex; align-items: flex-end; }
.tr-warn { width: 24px; height: 26px; position: relative; }
.tr-lock { width: 24px; height: 26px; margin-left: 5px; }
.tr-caret { width: 11px; height: 7px; margin: 0 0 2px 12px; }
.tr-clean { display: block; width: 22px; height: 20px; margin-left: 11px; background: #cfe2f6; border: 2px solid #5a8fc8; }

/* balloon */
.balloon { position: absolute; left: 1504px; top: 893px; width: 416px; height: 107px; background: #fffde4; border: 2px solid #222; border-radius: 18px; padding: 8px 10px 0 21px; color: #333; font-size: 15px; z-index: 5; }
.tail { position: absolute; left: 294px; top: 103px; width: 28px; height: 36px; overflow: visible; }
.b-head { display: flex; align-items: center; height: 26px; margin-left: -9px; }
.info { width: 22px; height: 22px; margin-right: 15px; }
.b-head strong { font-size: 16px; color: #111; }
.b-close { margin-left: auto; width: 24px; height: 24px; display: flex; align-items: center; justify-content: center; border: 1px solid #bbb; background: #f4f4f4; font-size: 15px; color: #111; }
.balloon p { margin: 8px 0 9px; white-space: nowrap; letter-spacing: -.1px; }
.balloon a { color: #3a3ae0; text-decoration: underline; }
```
